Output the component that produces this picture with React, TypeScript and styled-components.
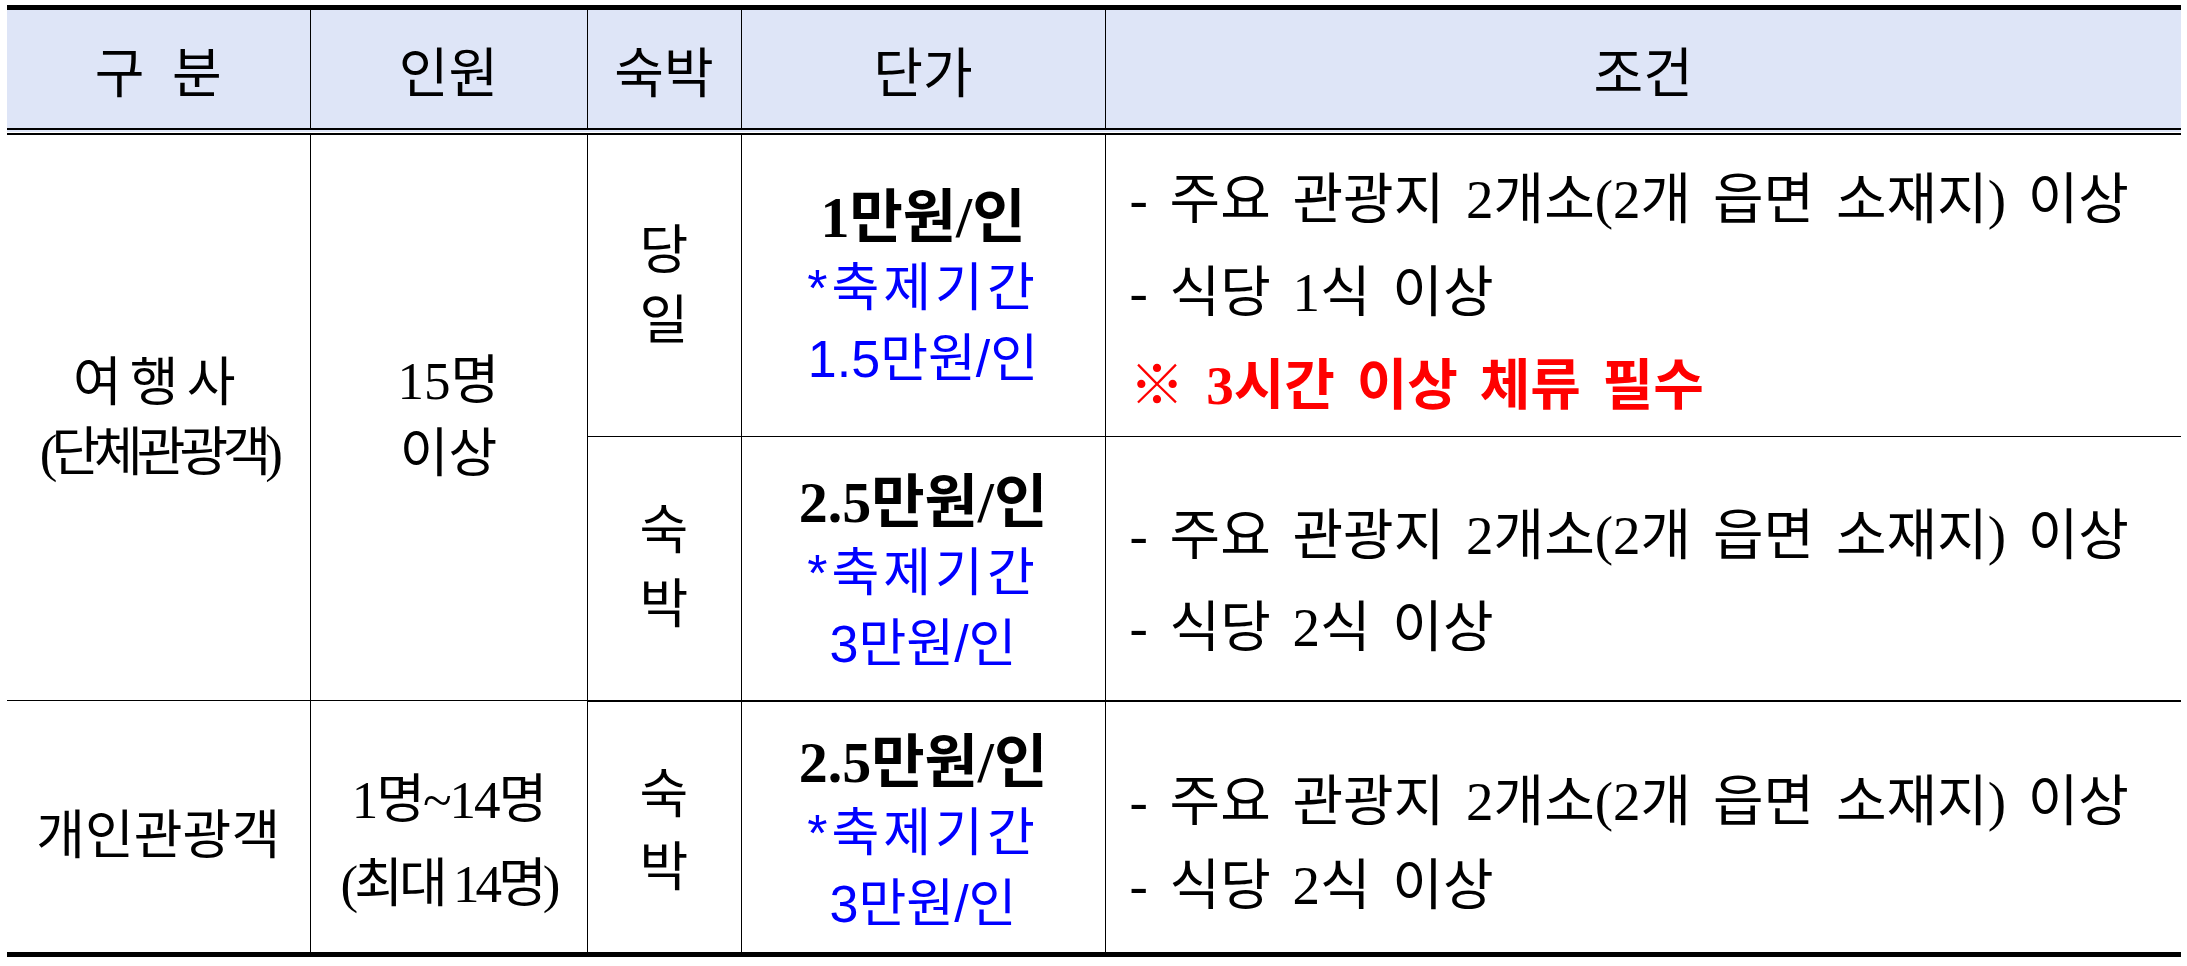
import React from 'react'
import styled, { createGlobalStyle } from 'styled-components'

const serifKR = `"Liberation Serif", "Noto Sans CJK KR", serif`
const sansKR = `"Liberation Sans", "Noto Sans CJK KR", sans-serif`

const GlobalStyle = createGlobalStyle`
  html, body {
    margin: 0;
    padding: 0;
    background: #ffffff;
  }
`

const Page = styled.div`
  padding: 5px 0 0 7px;
  font-family: ${serifKR};
  color: #000;
`

const Table = styled.table`
  width: 2174px;
  border-collapse: collapse;
  table-layout: fixed;
`

const HeadCell = styled.th`
  height: 118px;
  padding: 0;
  background: #dee5f7;
  border-top: 5px solid #000;
  border-bottom: 7px double #000;
  border-left: 1px solid #000;
  border-right: 1px solid #000;
  font-size: 54px;
  font-weight: 400;
  text-align: center;
  vertical-align: middle;
  word-spacing: 14px;

  &:first-child { border-left: none; }
  &:last-child { border-right: none; }
`

const Row = styled.tr<{ $h: number }>`
  height: ${(p) => p.$h}px;
`

const Cell = styled.td<{ $left?: boolean; $bottom?: number; $padTop?: number }>`
  padding: ${(p) => p.$padTop ?? 0}px 0 0 ${(p) => (p.$left ? 24 : 0)}px;
  border-left: 1px solid #000;
  border-right: 1px solid #000;
  border-bottom: ${(p) => p.$bottom ?? 1}px solid #000;
  text-align: ${(p) => (p.$left ? 'left' : 'center')};
  vertical-align: middle;
  font-size: 53px;

  &:first-child { border-left: none; }
  &:last-child { border-right: none; }
`

const Lines = styled.div<{ $lh: number }>`
  line-height: ${(p) => p.$lh}px;
  white-space: nowrap;
`

const GroupName = styled.div<{ $spacing?: number }>`
  letter-spacing: ${(p) => p.$spacing ?? 0}px;
`

const PriceMain = styled.div`
  font-weight: 700;
  font-size: 58px;
`

const PriceNote = styled.div<{ $spacing?: number }>`
  font-family: ${sansKR};
  color: #0000ff;
  font-size: 52px;
  letter-spacing: ${(p) => p.$spacing ?? 0}px;
`

const Condition = styled.div`
  font-size: 55px;
  word-spacing: 8px;
`

const Warning = styled.div`
  font-size: 55px;
  font-weight: 700;
  color: #ff0000;
  word-spacing: 8px;
`

type Price = { main: string; fest: string }

const Prices: React.FC<Price> = ({ main, fest }) => (
  <Lines $lh={71}>
    <PriceMain>{main}</PriceMain>
    <PriceNote $spacing={4}>*축제기간</PriceNote>
    <PriceNote>{fest}</PriceNote>
  </Lines>
)

const App: React.FC = () => {
  return (
    <Page>
      <GlobalStyle />
      <Table>
        <colgroup>
          <col style={{ width: 303 }} />
          <col style={{ width: 277 }} />
          <col style={{ width: 154 }} />
          <col style={{ width: 364 }} />
          <col style={{ width: 1076 }} />
        </colgroup>
        <thead>
          <tr>
            <HeadCell>구 분</HeadCell>
            <HeadCell>인원</HeadCell>
            <HeadCell>숙박</HeadCell>
            <HeadCell>단가</HeadCell>
            <HeadCell>조건</HeadCell>
          </tr>
        </thead>
        <tbody>
          <Row $h={305}>
            <Cell rowSpan={2}>
              <Lines $lh={70}>
                <GroupName $spacing={8}>여행사</GroupName>
                <GroupName $spacing={-6}>(단체관광객)</GroupName>
              </Lines>
            </Cell>
            <Cell rowSpan={2}>
              <Lines $lh={73}>
                <div>15명</div>
                <div>이상</div>
              </Lines>
            </Cell>
            <Cell>
              <Lines $lh={70}>
                <div>당</div>
                <div>일</div>
              </Lines>
            </Cell>
            <Cell $padTop={6}>
              <Prices main="1만원/인" fest="1.5만원/인" />
            </Cell>
            <Cell $left $padTop={14}>
              <Lines $lh={93}>
                <Condition>- 주요 관광지 2개소(2개 읍면 소재지) 이상</Condition>
                <Condition>- 식당 1식 이상</Condition>
                <Warning>※ 3시간 이상 체류 필수</Warning>
              </Lines>
            </Cell>
          </Row>
          <Row $h={264}>
            <Cell $bottom={2}>
              <Lines $lh={74}>
                <div>숙</div>
                <div>박</div>
              </Lines>
            </Cell>
            <Cell $bottom={2} $padTop={10}>
              <Prices main="2.5만원/인" fest="3만원/인" />
            </Cell>
            <Cell $left $bottom={2} $padTop={28}>
              <Lines $lh={92}>
                <Condition>- 주요 관광지 2개소(2개 읍면 소재지) 이상</Condition>
                <Condition>- 식당 2식 이상</Condition>
              </Lines>
            </Cell>
          </Row>
          <Row $h={254}>
            <Cell $bottom={5} $padTop={8}>
              <GroupName>개인관광객</GroupName>
            </Cell>
            <Cell $bottom={5} $padTop={30}>
              <Lines $lh={84}>
                <GroupName $spacing={-2}>1명~14명</GroupName>
                <GroupName $spacing={-4}>(최대 14명)</GroupName>
              </Lines>
            </Cell>
            <Cell $bottom={5} $padTop={10}>
              <Lines $lh={73}>
                <div>숙</div>
                <div>박</div>
              </Lines>
            </Cell>
            <Cell $bottom={5} $padTop={14}>
              <Prices main="2.5만원/인" fest="3만원/인" />
            </Cell>
            <Cell $left $bottom={5} $padTop={34}>
              <Lines $lh={84}>
                <Condition>- 주요 관광지 2개소(2개 읍면 소재지) 이상</Condition>
                <Condition>- 식당 2식 이상</Condition>
              </Lines>
            </Cell>
          </Row>
        </tbody>
      </Table>
    </Page>
  )
}

export default App
